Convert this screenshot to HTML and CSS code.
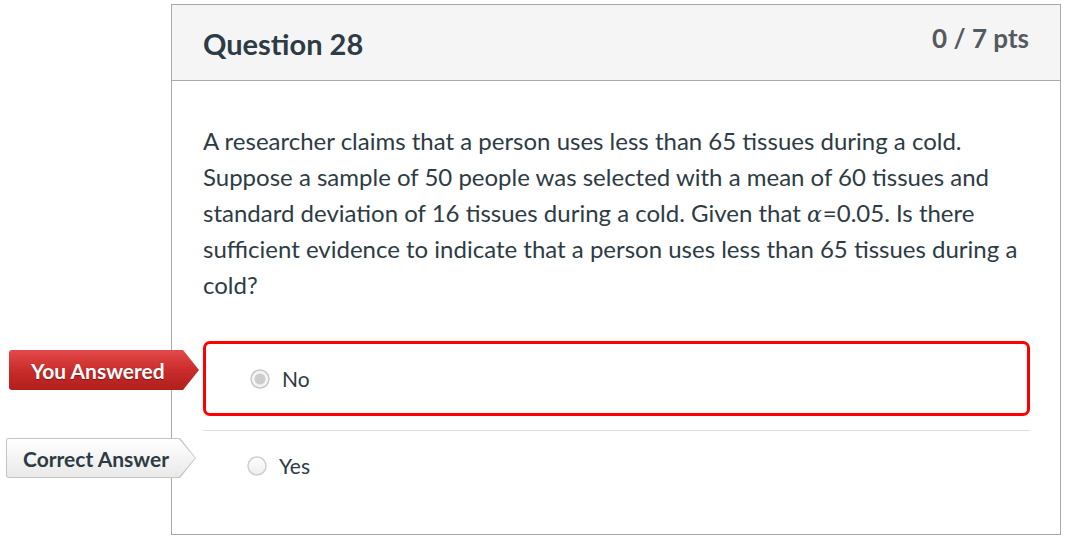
FILE: index.html
```html
<!DOCTYPE html>
<html lang="en">
<head>
<meta charset="utf-8">
<title>Question 28</title>
<link rel="stylesheet" href="styles.css">
</head>
<body>
<div class="page">
  <div class="question">
    <div class="q-header">
      <h2 class="q-title">Question 28</h2>
      <div class="q-points">0 / 7 pts</div>
    </div>
    <div class="q-body">
      <p class="q-text">A researcher claims that a person uses less than 65 tissues during a cold. Suppose a sample of 50 people was selected with a mean of 60 tissues and standard deviation of 16 tissues during a cold. Given that <span class="math">α</span>=0.05. Is there sufficient evidence to indicate that a person uses less than 65 tissues during a cold?</p>
      <div class="answers">
        <div class="answer selected">
          <div class="arrow arrow-red"><span>You Answered</span></div>
          <svg class="radio" width="20" height="20" viewBox="0 0 20 20">
            <circle cx="10" cy="10" r="9" fill="#f4f4f4" stroke="#c9c9c9" stroke-width="1.5"/>
            <circle cx="10" cy="10" r="5.5" fill="#cdcdcd"/>
          </svg>
          <span class="answer-text">No</span>
        </div>
        <div class="answer">
          <div class="arrow arrow-grey"><span>Correct Answer</span></div>
          <svg class="radio" width="20" height="20" viewBox="0 0 20 20">
            <defs>
              <linearGradient id="rg" x1="0" y1="0" x2="0" y2="1">
                <stop offset="0" stop-color="#ffffff"/>
                <stop offset="1" stop-color="#ededed"/>
              </linearGradient>
            </defs>
            <circle cx="10" cy="10" r="9" fill="url(#rg)" stroke="#cfcfcf" stroke-width="1.5"/>
          </svg>
          <span class="answer-text">Yes</span>
        </div>
      </div>
    </div>
  </div>
</div>
</body>
</html>
```
FILE: styles.css
```css
html, body {
  margin: 0;
  padding: 0;
  background: #ffffff;
}
body {
  font-family: Lato, "Open Sans", sans-serif;
  color: #2d3b45;
}
.page {
  padding: 4px 0 0 171px;
}
.question {
  width: 888px;
  height: 529px;
  border: 1px solid #a9a9a9;
  box-sizing: content-box;
}
.q-header {
  display: flex;
  justify-content: space-between;
  align-items: flex-start;
  height: 75px;
  background: #f5f5f5;
  border-bottom: 1px solid #a9a9a9;
  padding: 0 31px 0 31px;
}
.q-title {
  margin: 0;
  padding-top: 21px;
  font-size: 29px;
  line-height: 36px;
  font-weight: 700;
  color: #2d3b45;
}
.q-points {
  padding-top: 17px;
  font-size: 26px;
  line-height: 32px;
  font-weight: 700;
  color: #555a5e;
}
.q-body {
  padding: 42px 30px 0 31px;
}
.q-text {
  margin: 0;
  font-size: 24px;
  line-height: 36px;
}
.math {
  font-family: "DejaVu Serif", serif;
  font-style: italic;
  font-size: 22px;
  line-height: 1;
  padding-right: 1px;
  color: #2d3b45;
}
.answers {
  margin-top: 38px;
}
.answer {
  position: relative;
  display: flex;
  align-items: center;
  gap: 12px;
  height: 70px;
  padding-left: 44px;
  border-top: 1px solid #dddddd;
  box-sizing: content-box;
}
.answer.selected {
  height: 69px;
  border: 3px solid #ff0000;
  border-radius: 7px;
  padding-left: 44px;
  margin-bottom: 14px;
  gap: 12px;
}
.answer-text {
  font-size: 21px;
  line-height: 30px;
}
.radio {
  display: block;
  flex: none;
}
.arrow {
  position: absolute;
  width: 190px;
  height: 40px;
  clip-path: polygon(0 0, 174px 0, 190px 20px, 174px 40px, 0 40px);
  display: flex;
  align-items: center;
  font-weight: 700;
  font-size: 21px;
}
.arrow-red {
  left: -197px;
  top: 6px;
  width: 190px;
  background: linear-gradient(#e24a49, #c72a28 55%, #b11f1d);
  color: #ffffff;
  border-radius: 3px 0 0 3px;
  text-shadow: 0 1px 1px rgba(0, 0, 0, 0.35);
}
.arrow-red span {
  padding-left: 22px;
}
.arrow-grey {
  left: -197px;
  top: 7px;
  width: 191px;
  background: #c4c4c4;
  color: #2d3b45;
  border-radius: 3px 0 0 3px;
}
.arrow-grey::before {
  content: "";
  position: absolute;
  inset: 1px;
  background: linear-gradient(#ffffff, #e9e9e9);
  clip-path: polygon(0 0, 172px 0, 188px 19px, 172px 38px, 0 38px);
  border-radius: 2px 0 0 2px;
}
.arrow-grey span {
  position: relative;
  padding-left: 17px;
}
```
